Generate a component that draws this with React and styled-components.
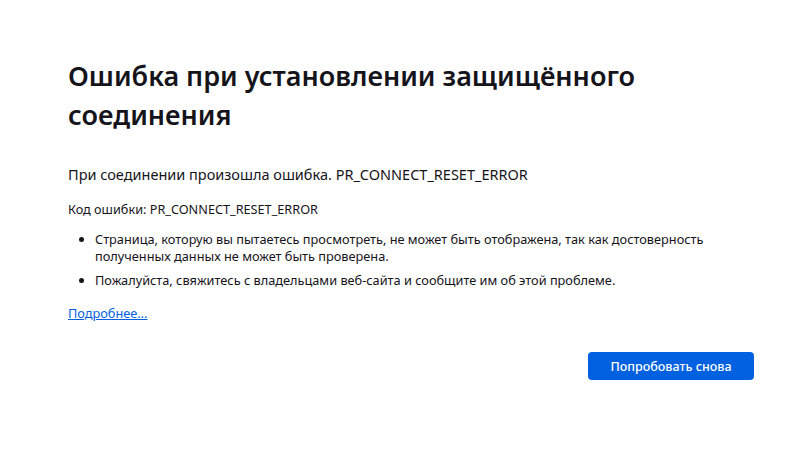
import React from "react";
import styled, { createGlobalStyle } from "styled-components";

const Global = createGlobalStyle`
  html, body { margin: 0; padding: 0; background: #fff; }
  body { font-family: "Noto Sans", "Open Sans", sans-serif; color: #15141a; }
`;

const Page = styled.div`
  width: 800px;
  height: 462px;
  box-sizing: border-box;
  padding: 56px 46px 0 68px;
`;

const Container = styled.div`
  width: 686px;
  display: flex;
  flex-direction: column;
`;

const Title = styled.h1`
  margin: 0;
  font-size: 27px;
  line-height: 39px;
  font-weight: 600;
  letter-spacing: 0;
`;

const Lead = styled.p`
  margin: 30px 0 0;
  font-size: 14.5px;
  line-height: 20px;
`;

const Code = styled.p`
  margin: 16px 0 0;
  font-size: 12.7px;
  line-height: 18px;
`;

const List = styled.ul`
  margin: 13px 0 0;
  padding: 0 0 0 27px;
  font-size: 12.75px;
  line-height: 17px;
  li { margin-bottom: 7px; }
`;

const Link = styled.a`
  margin-top: 8px;
  font-size: 12.75px;
  line-height: 18px;
  color: #0061e0;
  text-decoration: underline;
  align-self: flex-start;
`;

const Actions = styled.div`
  display: flex;
  justify-content: flex-end;
  margin-top: 30px;
`;

const Button = styled.button`
  width: 166px;
  height: 28px;
  border: 0;
  border-radius: 4px;
  background: #0061e0;
  color: #fff;
  font-family: inherit;
  font-size: 12.5px;
  font-weight: 500;
`;

export default function App() {
  return (
    <>
      <Global />
      <Page>
        <Container>
          <Title>Ошибка при установлении защищённого соединения</Title>
          <Lead>При соединении произошла ошибка. PR_CONNECT_RESET_ERROR</Lead>
          <Code>Код ошибки: PR_CONNECT_RESET_ERROR</Code>
          <List>
            <li>Страница, которую вы пытаетесь просмотреть, не может быть отображена, так как достоверность полученных данных не может быть проверена.</li>
            <li>Пожалуйста, свяжитесь с владельцами веб-сайта и сообщите им об этой проблеме.</li>
          </List>
          <Link href="#">Подробнее…</Link>
          <Actions>
            <Button>Попробовать снова</Button>
          </Actions>
        </Container>
      </Page>
    </>
  );
}
